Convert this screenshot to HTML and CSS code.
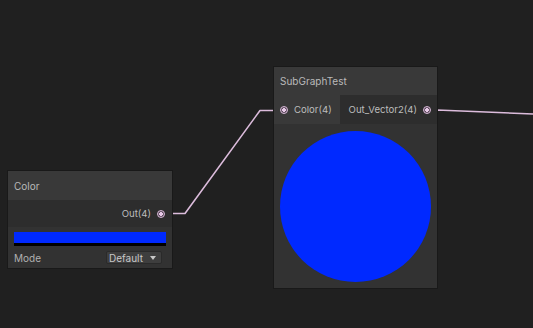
FILE: index.html
```html
<!DOCTYPE html>
<html>
  <head>
    <meta charset="UTF-8">
    <title>Shader Graph</title>
    <link rel="stylesheet" href="styles.css">
  </head>
  <body>
    <div class="graph">
      <!-- Edges between ports -->
      <svg class="wires" width="533" height="328" viewBox="0 0 533 328">
        <polyline points="161,213.5 185,213.5 260,110.5 283,110.5" />
        <polyline points="427,110.5 437,110 533,114" />
      </svg>

      <!-- Color property node -->
      <div class="node node-color">
        <div class="node-title">Color</div>
        <div class="ports">
          <div class="port out">
            <span class="port-label">Out(4)</span>
            <span class="port-dot"></span>
          </div>
        </div>
        <div class="node-body">
          <div class="swatch"></div>
          <div class="field">
            <span class="field-label">Mode</span>
            <div class="dropdown">
              <span>Default</span>
              <span class="caret"></span>
            </div>
          </div>
        </div>
      </div>

      <!-- Sub graph node -->
      <div class="node node-sub">
        <div class="node-title">SubGraphTest</div>
        <div class="ports">
          <div class="port-col inputs">
            <div class="port in">
              <span class="port-dot"></span>
              <span class="port-label">Color(4)</span>
            </div>
          </div>
          <div class="port-col outputs">
            <div class="port out">
              <span class="port-label">Out_Vector2(4)</span>
              <span class="port-dot"></span>
            </div>
          </div>
        </div>
        <div class="preview">
          <div class="preview-disc"></div>
        </div>
      </div>
    </div>
  </body>
</html>
```

FILE: styles.css
```css
* {
  box-sizing: border-box;
}
body {
  margin: 0;
  background: #202020;
  font-family: 'Inter', 'Liberation Sans', sans-serif;
  font-size: 10px;
  color: #bcbcbc;
}
.graph {
  position: relative;
  width: 533px;
  height: 328px;
  overflow: hidden;
}
/* Wires */
.wires {
  position: absolute;
  left: 0;
  top: 0;
}
.wires polyline {
  fill: none;
  stroke: #dcbcdc;
  stroke-width: 1.6;
  stroke-linejoin: round;
}
/* Nodes */
.node {
  position: absolute;
  background: #2e2e2e;
  border: 1px solid #191919;
  display: flex;
  flex-direction: column;
}
.node-color {
  left: 7px;
  top: 170px;
  width: 166px;
  height: 99px;
}
.node-sub {
  left: 273px;
  top: 66px;
  width: 165px;
  height: 223px;
}
.node-title {
  background: #393939;
  color: #bababa;
  padding: 0 6px;
  display: flex;
  align-items: center;
  height: 29px;
}
.node-sub .node-title {
  height: 28px;
}
.ports {
  display: flex;
  height: 27px;
  background: #2d2d2d;
}
.node-sub .ports {
  height: 29px;
}
.port {
  display: flex;
  align-items: center;
  gap: 6px;
  height: 100%;
}
.node-color .port.out {
  flex: 1;
  justify-content: flex-end;
  padding-right: 7px;
}
.port-col {
  height: 100%;
}
.inputs {
  width: 66px;
  background: #393939;
}
.inputs .port {
  padding-left: 6px;
}
.outputs {
  flex: 1;
}
.outputs .port {
  justify-content: flex-end;
  padding-right: 6px;
}
.port-label {
  color: #bcbcbc;
  font-size: 9.6px;
}
.port-dot {
  width: 8px;
  height: 8px;
  border-radius: 50%;
  border: 1px solid #d8b8d8;
  background: radial-gradient(circle, #e7c9e7 0 1.6px, #5a4a5a 2px);
  flex: none;
}
/* Color node body */
.node-body {
  flex: 1;
  background: #323232;
  padding: 5px 6px 0;
}
.swatch {
  height: 14px;
  background: #0029ff;
  border-bottom: 3px solid #000;
}
.field {
  display: flex;
  align-items: center;
  justify-content: space-between;
  margin-top: 5px;
}
.field-label {
  color: #b0b0b0;
}
.dropdown {
  width: 56px;
  height: 13px;
  margin-right: 4px;
  background: #3e3e3e;
  border: 1px solid #2a2a2a;
  border-radius: 2px;
  display: flex;
  align-items: center;
  justify-content: space-between;
  padding: 0 5px 0 2px;
  color: #c8c8c8;
}
.caret {
  width: 0;
  height: 0;
  border-left: 3px solid transparent;
  border-right: 3px solid transparent;
  border-top: 4px solid #c8c8c8;
}
/* Sub graph preview */
.preview {
  flex: 1;
  background: #323232;
  display: flex;
  align-items: center;
  justify-content: center;
}
.preview-disc {
  width: 151px;
  height: 151px;
  border-radius: 50%;
  background: #0029ff;
}
```
